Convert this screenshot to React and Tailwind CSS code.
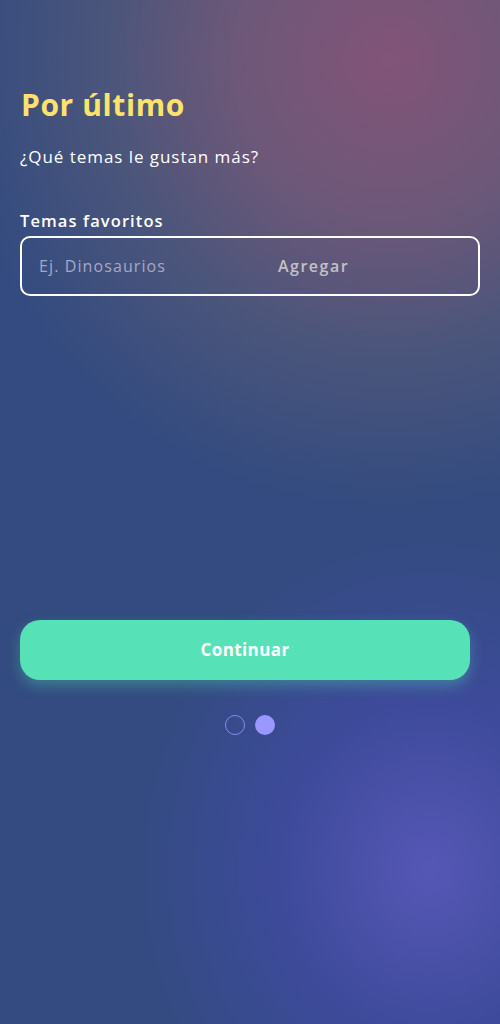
import React from "react";

export default function App() {
  return (
    <div
      className="relative w-[500px] h-[1024px] overflow-hidden bg-[#334b80]"
      style={{ fontFamily: "'Open Sans', 'Noto Sans', sans-serif" }}
    >
      <div className="absolute inset-0 bg-[radial-gradient(ellipse_440px_450px_at_390px_60px,rgba(134,84,120,0.95),rgba(128,92,118,0.75)_35%,rgba(110,100,115,0.4)_65%,rgba(51,75,128,0)_100%)]" />
      <div className="absolute inset-0 bg-[radial-gradient(ellipse_300px_340px_at_430px_870px,rgba(88,88,184,0.95),rgba(68,74,172,0.6)_50%,rgba(51,75,128,0)_100%)]" />
      <div className="relative flex flex-col px-5 pt-[86px]">
        <h1 className="text-[30px] leading-[38px] font-bold text-[#fde36c] tracking-[0.6px] pl-px">
          Por último
        </h1>
        <p className="mt-[21px] text-[17px] leading-[24px] text-white tracking-[0.95px]">
          ¿Qué temas le gustan más?
        </p>
        <label className="mt-[41px] text-[16.5px] leading-[22px] font-semibold text-white tracking-[1.1px]">
          Temas favoritos
        </label>
        <div className="mt-[4px] flex items-center h-[60px] w-[460px] rounded-[10px] border-2 border-white pl-[17px]">
          <span className="w-[239px] text-[16px] text-[#a6a9c4] tracking-[1.1px]">Ej. Dinosaurios</span>
          <span className="text-[16px] font-semibold text-[#c3c1c8] tracking-[1.5px]">Agregar</span>
        </div>
        <button className="mt-[324px] h-[60px] w-[450px] rounded-[20px] bg-[#56e2b6] text-white text-[17px] font-bold tracking-[0.4px] shadow-[0_6px_14px_rgba(80,220,180,0.35)]">
          Continuar
        </button>
        <div className="mt-[35px] flex justify-center gap-[10px] w-[460px]">
          <span className="w-5 h-5 rounded-full border-[1.5px] border-[#8b88f2]" />
          <span className="w-5 h-5 rounded-full bg-[#9a97ff]" />
        </div>
      </div>
    </div>
  );
}
